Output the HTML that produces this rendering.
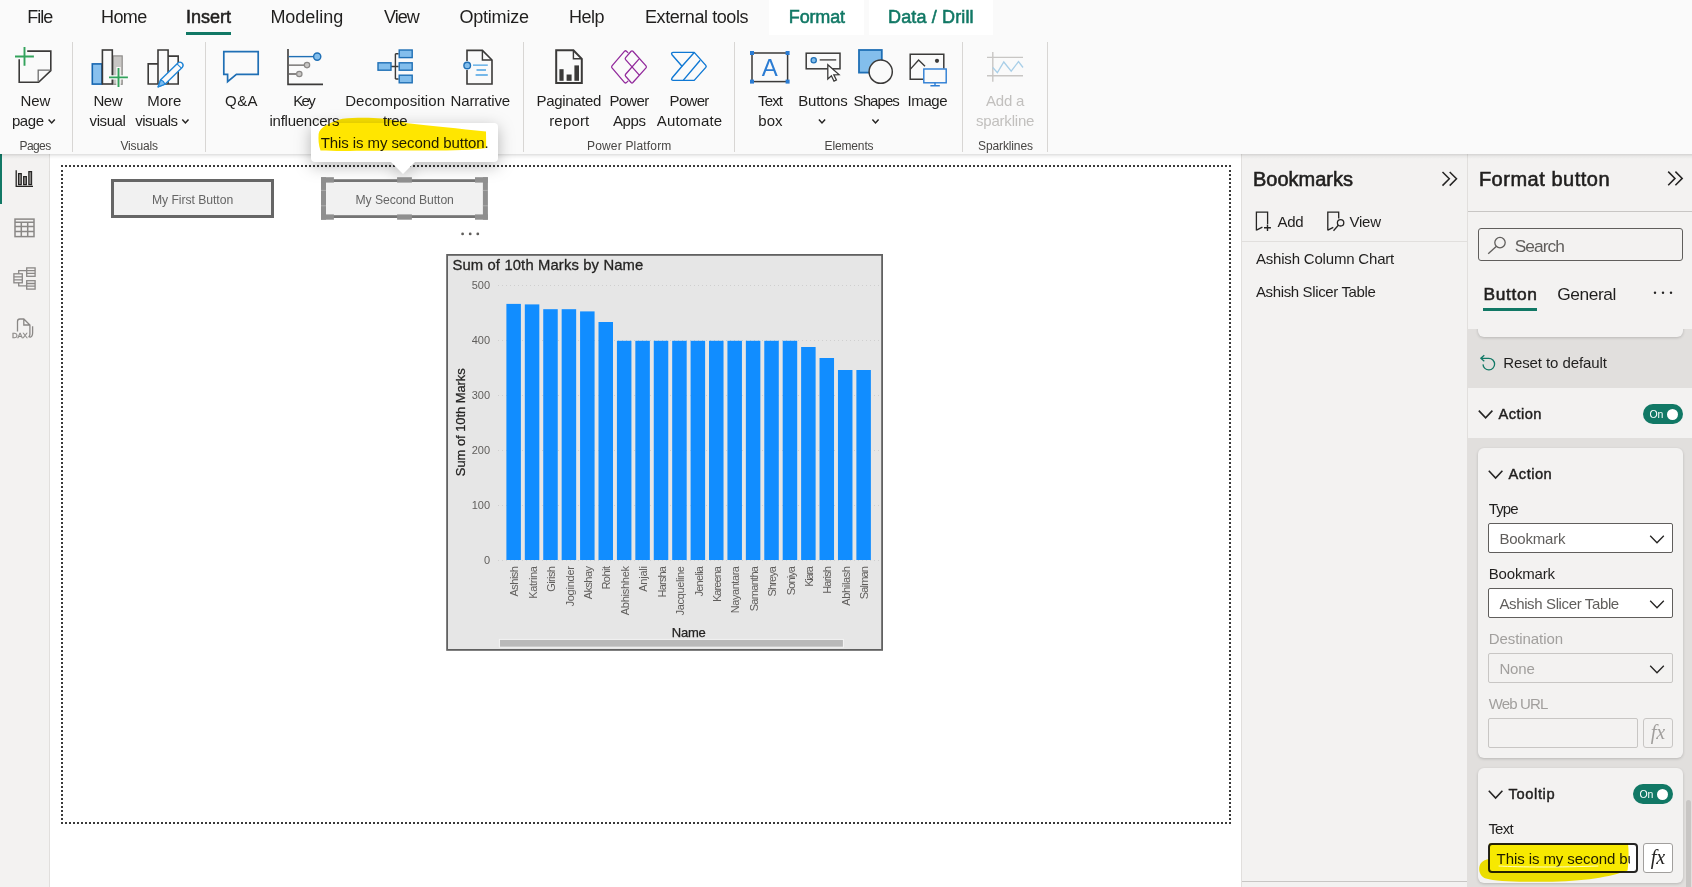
<!DOCTYPE html>
<html lang="en"><head><meta charset="utf-8"><title>Power BI Desktop - Button tooltip</title>
<style>
html,body{margin:0;padding:0}
body{width:1692px;height:887px;position:relative;overflow:hidden;background:#fff;font-family:"Liberation Sans",Arial,sans-serif;color:#252423}
div,span{box-sizing:border-box}
.a{position:absolute}
.t{position:absolute;white-space:nowrap;line-height:1;color:#201f1e}
.icons{position:absolute;left:0;top:0;pointer-events:none}
.ribbon{left:0;top:0;width:1692px;height:154px;background:#fafafa}
.ribshadow{left:0;top:154px;width:1692px;height:5px;background:linear-gradient(rgba(0,0,0,.13),rgba(0,0,0,.04) 50%,rgba(0,0,0,0))}
.ctab{top:0;height:35px;background:#fff}
.sep{top:42px;width:1px;height:110px;background:#d8d6d4}
.uline{height:3px;background:#117865}
.nav{left:0;top:154px;width:50px;height:733px;background:#f3f2f1;border-right:1px solid #e1dfdd}
.navsel{left:0;top:154px;width:2px;height:50px;background:#117865}
.canvas{left:61px;top:165px;width:1170px;height:659px}
.dh{height:2px;background:repeating-linear-gradient(90deg,#3a3a3a 0 2px,transparent 2px 4px)}
.dv{width:2px;background:repeating-linear-gradient(180deg,#3a3a3a 0 2px,transparent 2px 4px)}
.btn1{left:111px;top:179px;width:163px;height:39px;border:3px solid #666;background:#f1f1f1}
.btn2{left:321px;top:177px;width:167px;height:43px;border:4px solid #a0a0a0;background:#f0f0f0}
.h{background:#919191}
.tipwrap{left:0;top:0;width:1692px;height:300px;filter:drop-shadow(0 4px 8px rgba(0,0,0,.28))}
.tip{left:311px;top:123px;width:187px;height:39px;background:#fff;border-radius:4px}
.tiparrow{left:391px;top:161.5px;width:0;height:0;border-left:12.5px solid transparent;border-right:12.5px solid transparent;border-top:12.5px solid #fff}
.pane{top:154px;height:733px;background:#f3f2f1}
.bk{left:1241px;width:227px;border-left:1px solid #e1dfdd;border-right:1px solid #e1dfdd}
.fm{left:1468px;width:224px}
.hl{height:1px}
.gray{left:1468px;width:224px;background:#e1dfdd}
.card{left:1478px;width:205px;background:#f3f2f1;border-radius:6px;box-shadow:0 1px 3px rgba(0,0,0,.18)}
.dd{left:1488px;width:185px;height:30px;border:1px solid #605e5c;border-radius:2px;background:#fff}
.dd.dis{background:#f3f2f1;border-color:#c8c6c4}
.fx{left:1643px;width:30px;height:30px;border:1px solid #c8c6c4;border-radius:3px;font-family:"Liberation Serif",serif;font-style:italic;font-size:20px;line-height:26px;text-align:center}
.tog{width:40px;height:20px;border-radius:10px;background:#117865}
.knob{width:11px;height:11px;border-radius:50%;background:#fff}
.mult{position:absolute;left:0;top:0;mix-blend-mode:multiply;pointer-events:none}

</style></head>
<body>
<div class="a ribbon"></div>
<div class="a ctab" style="left:769px;width:95px"></div>
<div class="a ctab" style="left:869px;width:124px"></div>
<div class="a uline" style="left:186px;top:32px;width:45px"></div>
<div class="a sep" style="left:72px"></div>
<div class="a sep" style="left:205px"></div>
<div class="a sep" style="left:523px"></div>
<div class="a sep" style="left:734px"></div>
<div class="a sep" style="left:962px"></div>
<div class="a sep" style="left:1047px"></div>
<div class="a nav"></div>
<div class="a navsel"></div>
<!-- report canvas -->
<div class="a dh" style="left:61px;top:165px;width:1170px"></div>
<div class="a dh" style="left:61px;top:822px;width:1170px"></div>
<div class="a dv" style="left:61px;top:170px;height:654px"></div>
<div class="a dv" style="left:1229px;top:170px;height:654px"></div>
<div class="a btn1"></div>
<!-- right panes -->
<div class="a pane bk"></div>
<div class="a pane fm"></div>
<div class="a hl" style="left:1242px;top:241px;width:225px;background:#e1dfdd"></div>
<div class="a hl" style="left:1242px;top:881px;width:225px;background:#c8c6c4"></div>
<div class="a hl" style="left:1468px;top:211px;width:224px;background:#c8c6c4"></div>
<div class="a" style="left:1478px;top:228px;width:205px;height:33px;border:1px solid #605e5c;border-radius:3px"></div>
<div class="a uline" style="left:1483px;top:308px;width:54px"></div>
<div class="a gray" style="top:329px;height:558px;overflow:hidden"><div class="a" style="left:-1468px;top:-329px;width:1692px;height:887px">
  <div class="a card" style="top:300px;height:37px"></div>
  <div class="a" style="left:1468px;top:388px;width:224px;height:50px;background:#f3f2f1"></div>
  <div class="a card" style="top:448px;height:310px"></div>
  <div class="a card" style="top:768px;height:115px"></div>
  <div class="a dd" style="top:523px"></div>
  <div class="a dd" style="top:588px"></div>
  <div class="a dd dis" style="top:653px"></div>
  <div class="a dd dis" style="top:718px;width:150px"></div>
  <div class="a fx" style="top:718px;color:#a19f9d">fx</div>
  <div class="a" style="left:1488px;top:843px;width:150px;height:30px;border:2px solid #252423;border-radius:4px;background:#fff"></div>
  <div class="a fx" style="top:843px;background:#fff;color:#252423;border-color:#a19f9d">fx</div>
  <div class="a tog" style="left:1643px;top:404px"></div><div class="a knob" style="left:1666.5px;top:408.5px"></div>
  <div class="a tog" style="left:1633px;top:784px"></div><div class="a knob" style="left:1656.5px;top:788.5px"></div>
  <div class="a" style="left:1686px;top:800px;width:5px;height:90px;background:#c8c6c4;border-radius:3px"></div>
  <div class="a" style="left:1490px;top:845px;width:139.5px;height:26px;overflow:hidden"><span class="t" style="left:6.6px;top:6.00px;font-size:15px;letter-spacing:-0.087px">This is my second button.</span></div>
</div></div>
<div class="a ribshadow"></div>
<div class="a tipwrap"><div class="a tip"></div><div class="a tiparrow"></div></div>

<svg class="icons" width="1692" height="887" viewBox="0 0 1692 887">
<rect x="447.1" y="254.9" width="435" height="395" fill="#e6e6e6" stroke="#616161" stroke-width="1.8"/>
<path d="M498 285.5H879" stroke="#cfcfcf" stroke-width="1" stroke-dasharray="1 3"/>
<text x="490" y="289.2" font-family="Liberation Sans, Arial, sans-serif" font-size="11" fill="#605e5c" text-anchor="end">500</text>
<path d="M498 340.5H879" stroke="#cfcfcf" stroke-width="1" stroke-dasharray="1 3"/>
<text x="490" y="344.2" font-family="Liberation Sans, Arial, sans-serif" font-size="11" fill="#605e5c" text-anchor="end">400</text>
<path d="M498 395.5H879" stroke="#cfcfcf" stroke-width="1" stroke-dasharray="1 3"/>
<text x="490" y="399.2" font-family="Liberation Sans, Arial, sans-serif" font-size="11" fill="#605e5c" text-anchor="end">300</text>
<path d="M498 450.5H879" stroke="#cfcfcf" stroke-width="1" stroke-dasharray="1 3"/>
<text x="490" y="454.2" font-family="Liberation Sans, Arial, sans-serif" font-size="11" fill="#605e5c" text-anchor="end">200</text>
<path d="M498 505.5H879" stroke="#cfcfcf" stroke-width="1" stroke-dasharray="1 3"/>
<text x="490" y="509.2" font-family="Liberation Sans, Arial, sans-serif" font-size="11" fill="#605e5c" text-anchor="end">100</text>
<path d="M498 560.5H879" stroke="#cfcfcf" stroke-width="1" stroke-dasharray="1 3"/>
<text x="490" y="564.2" font-family="Liberation Sans, Arial, sans-serif" font-size="11" fill="#605e5c" text-anchor="end">0</text>
<rect x="506.40" y="303.9" width="14.5" height="256.1" fill="#118dff"/>
<text transform="translate(518.2 566) rotate(-90)" font-family="Liberation Sans, Arial, sans-serif" font-size="11" fill="#605e5c" text-anchor="end" textLength="30.6" lengthAdjust="spacing">Ashish</text>
<rect x="524.82" y="304.4" width="14.5" height="255.6" fill="#118dff"/>
<text transform="translate(536.7 566) rotate(-90)" font-family="Liberation Sans, Arial, sans-serif" font-size="11" fill="#605e5c" text-anchor="end" textLength="32.8" lengthAdjust="spacing">Katrina</text>
<rect x="543.24" y="309.2" width="14.5" height="250.8" fill="#118dff"/>
<text transform="translate(555.1 566) rotate(-90)" font-family="Liberation Sans, Arial, sans-serif" font-size="11" fill="#605e5c" text-anchor="end" textLength="25.8" lengthAdjust="spacing">Girish</text>
<rect x="561.66" y="309.2" width="14.5" height="250.8" fill="#118dff"/>
<text transform="translate(573.5 566) rotate(-90)" font-family="Liberation Sans, Arial, sans-serif" font-size="11" fill="#605e5c" text-anchor="end" textLength="40.6" lengthAdjust="spacing">Joginder</text>
<rect x="580.08" y="311.4" width="14.5" height="248.6" fill="#118dff"/>
<text transform="translate(591.9 566) rotate(-90)" font-family="Liberation Sans, Arial, sans-serif" font-size="11" fill="#605e5c" text-anchor="end" textLength="33.3" lengthAdjust="spacing">Akshay</text>
<rect x="598.50" y="322" width="14.5" height="238.0" fill="#118dff"/>
<text transform="translate(610.4 566) rotate(-90)" font-family="Liberation Sans, Arial, sans-serif" font-size="11" fill="#605e5c" text-anchor="end" textLength="23.6" lengthAdjust="spacing">Rohit</text>
<rect x="616.92" y="340.8" width="14.5" height="219.2" fill="#118dff"/>
<text transform="translate(628.8 566) rotate(-90)" font-family="Liberation Sans, Arial, sans-serif" font-size="11" fill="#605e5c" text-anchor="end" textLength="49.2" lengthAdjust="spacing">Abhishhek</text>
<rect x="635.34" y="340.8" width="14.5" height="219.2" fill="#118dff"/>
<text transform="translate(647.2 566) rotate(-90)" font-family="Liberation Sans, Arial, sans-serif" font-size="11" fill="#605e5c" text-anchor="end" textLength="25.8" lengthAdjust="spacing">Anjali</text>
<rect x="653.76" y="340.8" width="14.5" height="219.2" fill="#118dff"/>
<text transform="translate(665.6 566) rotate(-90)" font-family="Liberation Sans, Arial, sans-serif" font-size="11" fill="#605e5c" text-anchor="end" textLength="31.4" lengthAdjust="spacing">Harsha</text>
<rect x="672.18" y="340.8" width="14.5" height="219.2" fill="#118dff"/>
<text transform="translate(684.0 566) rotate(-90)" font-family="Liberation Sans, Arial, sans-serif" font-size="11" fill="#605e5c" text-anchor="end" textLength="49.4" lengthAdjust="spacing">Jacqueline</text>
<rect x="690.60" y="340.8" width="14.5" height="219.2" fill="#118dff"/>
<text transform="translate(702.5 566) rotate(-90)" font-family="Liberation Sans, Arial, sans-serif" font-size="11" fill="#605e5c" text-anchor="end" textLength="30.6" lengthAdjust="spacing">Jenelia</text>
<rect x="709.02" y="340.8" width="14.5" height="219.2" fill="#118dff"/>
<text transform="translate(720.9 566) rotate(-90)" font-family="Liberation Sans, Arial, sans-serif" font-size="11" fill="#605e5c" text-anchor="end" textLength="36.1" lengthAdjust="spacing">Kareena</text>
<rect x="727.44" y="340.8" width="14.5" height="219.2" fill="#118dff"/>
<text transform="translate(739.3 566) rotate(-90)" font-family="Liberation Sans, Arial, sans-serif" font-size="11" fill="#605e5c" text-anchor="end" textLength="47.2" lengthAdjust="spacing">Nayantara</text>
<rect x="745.86" y="340.8" width="14.5" height="219.2" fill="#118dff"/>
<text transform="translate(757.7 566) rotate(-90)" font-family="Liberation Sans, Arial, sans-serif" font-size="11" fill="#605e5c" text-anchor="end" textLength="45.3" lengthAdjust="spacing">Samantha</text>
<rect x="764.28" y="340.8" width="14.5" height="219.2" fill="#118dff"/>
<text transform="translate(776.1 566) rotate(-90)" font-family="Liberation Sans, Arial, sans-serif" font-size="11" fill="#605e5c" text-anchor="end" textLength="30.6" lengthAdjust="spacing">Shreya</text>
<rect x="782.70" y="340.8" width="14.5" height="219.2" fill="#118dff"/>
<text transform="translate(794.6 566) rotate(-90)" font-family="Liberation Sans, Arial, sans-serif" font-size="11" fill="#605e5c" text-anchor="end" textLength="29.2" lengthAdjust="spacing">Soniya</text>
<rect x="801.12" y="347" width="14.5" height="213.0" fill="#118dff"/>
<text transform="translate(813.0 566) rotate(-90)" font-family="Liberation Sans, Arial, sans-serif" font-size="11" fill="#605e5c" text-anchor="end" textLength="20.8" lengthAdjust="spacing">Kiara</text>
<rect x="819.54" y="358" width="14.5" height="202.0" fill="#118dff"/>
<text transform="translate(831.4 566) rotate(-90)" font-family="Liberation Sans, Arial, sans-serif" font-size="11" fill="#605e5c" text-anchor="end" textLength="27.8" lengthAdjust="spacing">Harish</text>
<rect x="837.96" y="370" width="14.5" height="190.0" fill="#118dff"/>
<text transform="translate(849.8 566) rotate(-90)" font-family="Liberation Sans, Arial, sans-serif" font-size="11" fill="#605e5c" text-anchor="end" textLength="39.7" lengthAdjust="spacing">Abhilash</text>
<rect x="856.38" y="370" width="14.5" height="190.0" fill="#118dff"/>
<text transform="translate(868.2 566) rotate(-90)" font-family="Liberation Sans, Arial, sans-serif" font-size="11" fill="#605e5c" text-anchor="end" textLength="33.3" lengthAdjust="spacing">Salman</text>
<text x="452.4" y="269.8" font-family="Liberation Sans, Arial, sans-serif" font-size="14.8" fill="#252423" stroke="#252423" stroke-width="0.3" textLength="190.9" lengthAdjust="spacing">Sum of 10th Marks by Name</text>
<text x="671.7" y="636.7" font-family="Liberation Sans, Arial, sans-serif" font-size="13" fill="#252423" stroke="#252423" stroke-width="0.25" textLength="34.1" lengthAdjust="spacing">Name</text>
<text transform="translate(464.5 422.2) rotate(-90)" font-family="Liberation Sans, Arial, sans-serif" font-size="13" fill="#252423" stroke="#252423" stroke-width="0.25" text-anchor="middle" textLength="108" lengthAdjust="spacing">Sum of 10th Marks</text>
<rect x="499.4" y="639.4" width="344" height="7.8" fill="#b9b9b9" stroke="#f4f4f4" stroke-width="1"/>
</svg>
<svg class="icons" width="1692" height="887" viewBox="0 0 1692 887">
<g fill="none" stroke-linecap="butt" stroke-linejoin="miter">
<!-- New page -->
<path d="M27.2 51.1H50.8V70.6L38.6 82.3H19.2V59.2" stroke="#3b3a39" stroke-width="1.6"/>
<path d="M38.2 82V70.2H50.4" stroke="#6e6e6e" stroke-width="1.3"/>
<path d="M15 56.5H33.9M24.5 47.1V65.7" stroke="#33a35c" stroke-width="1.9"/>
<path d="M48.6 119.6L51.7 122.9L54.8 119.6" stroke="#252423" stroke-width="1.5"/>
<!-- New visual -->
<rect x="113.1" y="55.9" width="9.1" height="28.4" fill="#c8c6c4" stroke="#8f8d8b" stroke-width="1.2"/>
<rect x="92.3" y="63.9" width="9.6" height="20.2" fill="#88c0ee" stroke="#1565b0" stroke-width="1.6"/>
<rect x="102.4" y="50" width="9.9" height="34" fill="#fafafa" stroke="#3b3a39" stroke-width="1.6"/>
<path d="M108 77.4H128.9M118.5 67V87.9" stroke="#fafafa" stroke-width="4.4"/>
<path d="M109 77.4H127.9M118.5 68V86.9" stroke="#33a35c" stroke-width="1.9"/>
<!-- More visuals -->
<path d="M148.2 84V63.9H158M158 84V50H168.1V84M168.1 56.1H178.2V84M147.4 84H179" stroke="#3b3a39" stroke-width="1.6"/>
<path d="M158.1 86.9L160.7 79.8L177.9 63A3.1 3.1 0 0 1 182.4 67.2L165 84.2Z" fill="#fafafa" stroke="#1f84d6" stroke-width="1.4" stroke-linejoin="round"/>
<path d="M158.1 86.9L160.7 79.8Q163.8 80.8 165 84.2Z" fill="#7dbcf0" stroke="#1f84d6" stroke-width="1.2" stroke-linejoin="round"/>
<path d="M177 63.9L181.4 68.2" stroke="#1f84d6" stroke-width="1.1"/>
<path d="M182.3 119.6L185.4 122.9L188.5 119.6" stroke="#252423" stroke-width="1.5"/>
<!-- Q&A -->
<path d="M223.8 51.6H258.2V74.4H236.4L227.6 81.6V74.4H223.8Z" stroke="#1f6fb5" stroke-width="1.7"/>
<!-- Key influencers -->
<path d="M288 49V84.4H323" stroke="#3b3a39" stroke-width="1.6"/>
<path d="M288.8 56.6H313" stroke="#1f6fb5" stroke-width="1.4"/>
<circle cx="317.2" cy="56.6" r="3.6" fill="#83beec" stroke="#1f6fb5" stroke-width="1.4"/>
<path d="M288.8 65.1H304M288.8 74H296" stroke="#605e5c" stroke-width="1.4"/>
<circle cx="307" cy="65.1" r="2.7" fill="#c8c6c4" stroke="#8a8886" stroke-width="1.2"/>
<circle cx="299.3" cy="74" r="2.7" fill="#c8c6c4" stroke="#8a8886" stroke-width="1.2"/>
<!-- Decomposition tree -->
<path d="M391 66.5H398.6M395.4 53.8V79M395.4 53.8H398.6M395.4 79H398.6" stroke="#3b3a39" stroke-width="1.4"/>
<rect x="378" y="62.8" width="13" height="7.4" fill="#83beec" stroke="#1f6fb5" stroke-width="1.4"/>
<rect x="399.2" y="50" width="13" height="7.6" fill="#83beec" stroke="#1f6fb5" stroke-width="1.4"/>
<rect x="399.2" y="62.8" width="13" height="7.4" fill="#83beec" stroke="#1f6fb5" stroke-width="1.4"/>
<rect x="399.2" y="75.2" width="13" height="7.6" fill="#83beec" stroke="#1f6fb5" stroke-width="1.4"/>
<!-- Narrative -->
<path d="M467 61V50.4H482.4L492 60V84H467V70" stroke="#3b3a39" stroke-width="1.6"/>
<path d="M482.4 50.4V60H492" stroke="#3b3a39" stroke-width="1.4"/>
<circle cx="467.2" cy="65.5" r="3.3" fill="#83beec" stroke="#1f6fb5" stroke-width="1.4"/>
<path d="M473 65.1H487.8M476.5 70H486M475.6 75H487.8" stroke="#4ba3e3" stroke-width="1.3"/>
<!-- Paginated report -->
<path d="M556.2 50.3H573.4L581.8 58.8V83H556.2Z" stroke="#3b3a39" stroke-width="2"/>
<path d="M573.4 50.3V58.8H581.8" stroke="#3b3a39" stroke-width="1.4"/>
<rect x="559.4" y="69.2" width="4.2" height="11.6" fill="#3b3a39"/><rect x="566.6" y="74.5" width="5" height="6.3" fill="#3b3a39"/><rect x="574.4" y="65.4" width="4.6" height="15.4" fill="#3b3a39"/>
<!-- Power Apps -->
<g stroke="#922a9c" stroke-width="1.3" stroke-linejoin="round">
<path d="M628.2 52.9L626.4 51.2Q625.5 50.4 624.6 51.2L612 65.9Q611.2 66.9 612 67.9L624.6 82.6Q625.5 83.4 626.4 82.6L628.2 80.9"/>
<path d="M631.1 51.3Q632 50.4 632.9 51.3L646 65.9Q646.8 66.9 646 67.9L632.9 82.5Q632 83.4 631.1 82.5L625.6 76.2Q624.8 75.2 625.6 74.2L638.9 59.1M631.1 51.3L625.6 57.6Q624.8 58.6 625.6 59.6L639.1 74.9"/>
</g>
<!-- Power Automate -->
<g stroke="#0f78d4" stroke-width="1.4" stroke-linejoin="round">
<path d="M673 52.4H694.2L705.8 65.4Q706.6 66.4 705.8 67.4L694.2 80.4H673Q670.6 80 672.2 77.8L682 66.2L672.2 55Q670.6 52.8 673 52.4Z"/>
<path d="M694 52.8L682 66.2M700.2 60.3L683.4 80.1"/>
</g>
<!-- Text box -->
<rect x="752" y="53" width="35.6" height="28.6" stroke="#3b3a39" stroke-width="1.5"/>
<g fill="#2b7cd3" stroke="none"><rect x="750" y="51" width="4" height="4"/><rect x="785.6" y="51" width="4" height="4"/><rect x="750" y="79.6" width="4" height="4"/><rect x="785.6" y="79.6" width="4" height="4"/></g>
<!-- Buttons -->
<rect x="806.2" y="53.2" width="33.8" height="15.6" stroke="#3b3a39" stroke-width="1.5"/>
<circle cx="813.7" cy="60.2" r="2.6" fill="#83beec" stroke="#1f6fb5" stroke-width="1.3"/>
<path d="M819.7 59.9H836.2" stroke="#3b3a39" stroke-width="1.3"/>
<path d="M827.8 64.8V79L831.4 75.8L834 81.2L836.4 80L833.8 74.8L839 74.6Z" fill="#fff" stroke="#3b3a39" stroke-width="1.3" stroke-linejoin="miter"/>
<path d="M818.9 119.6L822 122.9L825.1 119.6M872.4 119.6L875.5 122.9L878.6 119.6" stroke="#252423" stroke-width="1.5"/>
<!-- Shapes -->
<rect x="859" y="50" width="22.8" height="22.6" fill="#83beec" stroke="#1f6fb5" stroke-width="1.8"/>
<circle cx="880.7" cy="71.7" r="11.6" fill="#fafafa" stroke="#3b3a39" stroke-width="1.5"/>
<!-- Image -->
<path d="M923.2 79.2H910.2V54.2H943.8V68.4" stroke="#3b3a39" stroke-width="1.5"/>
<path d="M910.2 69.4L918.6 60L925 66.2" stroke="#3b3a39" stroke-width="1.4"/>
<circle cx="937" cy="60.8" r="2.1" fill="#3b3a39"/>
<rect x="923.8" y="69" width="22.4" height="13.8" fill="#fafafa" stroke="#2b7cd3" stroke-width="1.4"/>
<path d="M935 82.8V85.8M930.4 85.8H939.8" stroke="#2b7cd3" stroke-width="1.4"/>
<!-- Sparkline (disabled) -->
<path d="M992.8 52V81.8M987 57.4H1023M987 75.7H1023" stroke="#c8c6c4" stroke-width="1.4"/>
<path d="M992.8 67.5L997.4 72.6L1003.8 62L1011.2 71.1L1018.5 61.6L1023 67.5" stroke="#a9cfe8" stroke-width="1.3"/>
<!-- second button + selection handles -->
<rect x="324.3" y="180.6" width="160.8" height="36" fill="#f1f1f1" stroke="#747474" stroke-width="2.8"/>
<g fill="#8f8f8f" stroke="none">
<rect x="321" y="177.2" width="5" height="42.5"/><rect x="482.9" y="177.2" width="5" height="42.5"/>
<rect x="321" y="177.2" width="12.9" height="5.4"/><rect x="475" y="177.2" width="12.9" height="5.4"/>
<rect x="321" y="214.4" width="12.9" height="5.3"/><rect x="475" y="214.4" width="12.9" height="5.3"/>
<rect x="397.1" y="177.2" width="14.8" height="5.4"/><rect x="397.1" y="214.4" width="14.8" height="5.3"/>
</g>
<path d="M321 190.4H326M321 205.8H326M482.9 190.4H487.9M482.9 205.8H487.9" stroke="#b5b5b5" stroke-width="0.8"/>
<!-- left nav -->
<path d="M16.2 170.2V186.4H33" stroke="#252423" stroke-width="1.3"/>
<path d="M18.5 184.6V173.6H21.3V184.6ZM23.6 184.6V176.6H26.4V184.6ZM28.8 184.6V171.6H31.6V184.6Z" stroke="#252423" stroke-width="1.1" fill="#8a8886"/>
<g stroke="#8a8886" stroke-width="1.5">
<rect x="15" y="219.1" width="19" height="17.5"/><path d="M15 222.2H34M15 226.6H34M15 231.6H34M21.3 222.2V236.6M27.7 222.2V236.6"/>
</g>
<g stroke="#8a8886" stroke-width="1.3">
<rect x="13.9" y="273.8" width="8.4" height="9"/><path d="M13.9 276.8H22.3M13.9 279.8H22.3"/>
<rect x="26.7" y="267.9" width="8.4" height="8.4"/><path d="M26.7 270.7H35.1M26.7 273.3H35.1"/>
<rect x="26.7" y="280.7" width="8.4" height="8.4"/><path d="M26.7 283.5H35.1M26.7 286.1H35.1"/>
<path d="M18.7 273.8V270.7H26.7M18.7 282.8V285.9H26.7"/>
<path d="M17.5 331.6V321.4Q17.5 319 19.9 319H23.8L29.9 325V334.6Q29.9 336.6 28.4 336.8M23.8 319V325H29.9M32.6 326.2V333Q32.6 337 29.4 337.4"/>
</g>
<!-- bookmarks pane -->
<path d="M1442.5 172L1449.3 178.8L1442.5 185.6M1449.7 172L1456.5 178.8L1449.7 185.6" stroke="#252423" stroke-width="1.5"/>
<path d="M1256.4 230.6V212.1H1267.6V224M1256.4 230.2L1262.4 227.2" stroke="#252423" stroke-width="1.3"/>
<path d="M1264 227.8H1270.9M1267.5 224.6V231" stroke="#252423" stroke-width="1.4"/>
<path d="M1327.8 230.6V212.1H1338.7V218.4M1327.8 230.2L1333.3 227.4" stroke="#252423" stroke-width="1.3"/>
<circle cx="1340.6" cy="222.8" r="3.2" stroke="#252423" stroke-width="1.3"/><path d="M1338.3 225.3L1333.5 230.7" stroke="#252423" stroke-width="1.3"/>
<!-- format pane -->
<path d="M1668.2 171.6L1675 178.4L1668.2 185.2M1675.4 171.6L1682.2 178.4L1675.4 185.2" stroke="#252423" stroke-width="1.5"/>
<circle cx="1500" cy="242.6" r="5.2" stroke="#605e5c" stroke-width="1.3"/><path d="M1496.2 246.4L1488.2 253.8" stroke="#605e5c" stroke-width="1.3"/>
<g fill="#252423" stroke="none"><circle cx="1655" cy="292.8" r="1.2"/><circle cx="1663" cy="292.8" r="1.2"/><circle cx="1671" cy="292.8" r="1.2"/></g>
<g fill="#605e5c" stroke="none"><circle cx="462.6" cy="233.9" r="1.4"/><circle cx="470.2" cy="233.9" r="1.4"/><circle cx="477.8" cy="233.9" r="1.4"/></g>
<path d="M1484.3 355.2L1480.8 358.3L1484.3 361.2M1480.8 358.3H1488.8A5.8 5.8 0 1 1 1483 364.4" stroke="#117865" stroke-width="1.3" stroke-linejoin="round"/>
<g stroke="#252423" stroke-width="1.6">
<path d="M1478.8 410.6L1485.6 417.8L1492.4 410.6M1488.8 470.8L1495.6 478L1502.4 470.8M1488.8 790.8L1495.6 798L1502.4 790.8"/>
</g>
<g stroke="#252423" stroke-width="1.3">
<path d="M1650.2 535.8L1657 542.8L1663.8 535.8M1650.2 600.8L1657 607.8L1663.8 600.8M1650.2 665.8L1657 672.8L1663.8 665.8"/>
</g>
</g>
<text x="769.8" y="76" font-family="Liberation Sans, Arial, sans-serif" font-size="24" fill="#2b7cd3" text-anchor="middle">A</text>
<text x="11.9" y="338.2" font-family="Liberation Sans, Arial, sans-serif" font-size="7.8" fill="#8a8886" stroke="#8a8886" stroke-width="0.3" textLength="15.9" lengthAdjust="spacingAndGlyphs">DAX</text>

</svg>
<div class="texts">
<span class="t" style="left:27.3px;top:8.00px;font-size:18px;letter-spacing:-1.005px;">File</span>
<span class="t" style="left:101.0px;top:8.00px;font-size:18px;letter-spacing:-0.572px;">Home</span>
<span class="t" style="left:186.0px;top:8.00px;font-size:18px;letter-spacing:-0.006px;-webkit-text-stroke:0.55px;">Insert</span>
<span class="t" style="left:270.4px;top:8.00px;font-size:18px;letter-spacing:-0.035px;">Modeling</span>
<span class="t" style="left:384.0px;top:8.00px;font-size:18px;letter-spacing:-1.001px;">View</span>
<span class="t" style="left:459.4px;top:8.00px;font-size:18px;letter-spacing:-0.202px;">Optimize</span>
<span class="t" style="left:569.0px;top:8.00px;font-size:18px;letter-spacing:-0.544px;">Help</span>
<span class="t" style="left:645.0px;top:8.00px;font-size:18px;letter-spacing:-0.428px;">External tools</span>
<span class="t" style="left:788.8px;top:8.00px;font-size:18px;letter-spacing:-0.163px;-webkit-text-stroke:0.55px;color:#117865;">Format</span>
<span class="t" style="left:888.0px;top:8.00px;font-size:18px;letter-spacing:0.144px;-webkit-text-stroke:0.55px;color:#117865;">Data / Drill</span>
<span class="t" style="left:20.5px;top:93.00px;font-size:15px;letter-spacing:-0.108px;">New</span>
<span class="t" style="left:11.9px;top:113.00px;font-size:15px;letter-spacing:-0.425px;">page</span>
<span class="t" style="left:93.4px;top:93.00px;font-size:15px;letter-spacing:-0.458px;">New</span>
<span class="t" style="left:89.6px;top:113.00px;font-size:15px;letter-spacing:-0.432px;">visual</span>
<span class="t" style="left:147.2px;top:93.00px;font-size:15px;letter-spacing:-0.029px;">More</span>
<span class="t" style="left:135.3px;top:113.00px;font-size:15px;letter-spacing:-0.527px;">visuals</span>
<span class="t" style="left:225.1px;top:93.00px;font-size:15px;letter-spacing:0.406px;">Q&amp;A</span>
<span class="t" style="left:293.2px;top:93.00px;font-size:15px;letter-spacing:-1.580px;">Key</span>
<span class="t" style="left:269.5px;top:113.00px;font-size:15px;letter-spacing:-0.255px;">influencers</span>
<span class="t" style="left:345.2px;top:93.00px;font-size:15px;letter-spacing:0.048px;">Decomposition</span>
<span class="t" style="left:383.0px;top:113.00px;font-size:15px;letter-spacing:-0.453px;">tree</span>
<span class="t" style="left:450.5px;top:93.00px;font-size:15px;letter-spacing:-0.145px;">Narrative</span>
<span class="t" style="left:536.5px;top:93.00px;font-size:15px;letter-spacing:-0.333px;">Paginated</span>
<span class="t" style="left:549.2px;top:113.00px;font-size:15px;letter-spacing:0.182px;">report</span>
<span class="t" style="left:609.4px;top:93.00px;font-size:15px;letter-spacing:-0.683px;">Power</span>
<span class="t" style="left:612.9px;top:113.00px;font-size:15px;letter-spacing:-0.368px;">Apps</span>
<span class="t" style="left:669.6px;top:93.00px;font-size:15px;letter-spacing:-0.708px;">Power</span>
<span class="t" style="left:656.8px;top:113.00px;font-size:15px;letter-spacing:0.154px;">Automate</span>
<span class="t" style="left:758.0px;top:93.00px;font-size:15px;letter-spacing:-0.839px;">Text</span>
<span class="t" style="left:758.3px;top:113.00px;font-size:15px;letter-spacing:0.006px;">box</span>
<span class="t" style="left:798.3px;top:93.00px;font-size:15px;letter-spacing:-0.246px;">Buttons</span>
<span class="t" style="left:853.6px;top:93.00px;font-size:15px;letter-spacing:-0.935px;">Shapes</span>
<span class="t" style="left:907.6px;top:93.00px;font-size:15px;letter-spacing:-0.426px;">Image</span>
<span class="t" style="left:985.9px;top:93.00px;font-size:15px;letter-spacing:-0.176px;color:#c2c0be;">Add a</span>
<span class="t" style="left:976.0px;top:113.00px;font-size:15px;letter-spacing:-0.204px;color:#c2c0be;">sparkline</span>
<span class="t" style="left:19.6px;top:140.00px;font-size:12px;letter-spacing:-0.608px;color:#484644;">Pages</span>
<span class="t" style="left:120.4px;top:140.00px;font-size:12px;letter-spacing:-0.145px;color:#484644;">Visuals</span>
<span class="t" style="left:587.0px;top:140.00px;font-size:12px;letter-spacing:0.175px;color:#484644;">Power Platform</span>
<span class="t" style="left:824.6px;top:140.00px;font-size:12px;letter-spacing:-0.147px;color:#484644;">Elements</span>
<span class="t" style="left:978.0px;top:140.00px;font-size:12px;letter-spacing:-0.115px;color:#484644;">Sparklines</span>
<span class="t" style="left:152.0px;top:194.00px;font-size:12.2px;letter-spacing:-0.054px;color:#666;">My First Button</span>
<span class="t" style="left:355.5px;top:194.00px;font-size:12.2px;letter-spacing:-0.080px;color:#666;">My Second Button</span>
<span class="t ontop" style="left:320.7px;top:135.00px;font-size:15px;letter-spacing:-0.087px;color:#201f1e;">This is my second button.</span>
<span class="t" style="left:1253.0px;top:169.00px;font-size:20px;letter-spacing:-0.004px;-webkit-text-stroke:0.6px;">Bookmarks</span>
<span class="t" style="left:1277.5px;top:214.00px;font-size:15px;letter-spacing:-0.252px;">Add</span>
<span class="t" style="left:1349.4px;top:214.00px;font-size:15px;letter-spacing:-0.217px;">View</span>
<span class="t" style="left:1255.9px;top:251.00px;font-size:15px;letter-spacing:-0.185px;">Ashish Column Chart</span>
<span class="t" style="left:1255.9px;top:284.00px;font-size:15px;letter-spacing:-0.359px;">Ashish Slicer Table</span>
<span class="t" style="left:1478.9px;top:169.00px;font-size:20px;letter-spacing:0.515px;-webkit-text-stroke:0.6px;">Format button</span>
<span class="t" style="left:1514.7px;top:238.00px;font-size:17.33px;letter-spacing:-0.921px;color:#605e5c;">Search</span>
<span class="t" style="left:1483.5px;top:286.00px;font-size:17.33px;letter-spacing:0.638px;-webkit-text-stroke:0.55px;">Button</span>
<span class="t" style="left:1557.3px;top:286.00px;font-size:17.33px;letter-spacing:-0.443px;">General</span>
<span class="t" style="left:1503.2px;top:355.00px;font-size:15px;letter-spacing:-0.085px;">Reset to default</span>
<span class="t" style="left:1498.4px;top:407.00px;font-size:14.67px;letter-spacing:0.473px;-webkit-text-stroke:0.45px;">Action</span>
<span class="t" style="left:1649.5px;top:409.00px;font-size:10.5px;letter-spacing:-0.216px;color:#fff;">On</span>
<span class="t" style="left:1508.6px;top:467.00px;font-size:14.67px;letter-spacing:0.473px;-webkit-text-stroke:0.45px;">Action</span>
<span class="t" style="left:1488.8px;top:501.00px;font-size:15px;letter-spacing:-0.944px;">Type</span>
<span class="t" style="left:1499.4px;top:531.00px;font-size:15px;letter-spacing:-0.204px;color:#605e5c;">Bookmark</span>
<span class="t" style="left:1488.8px;top:566.00px;font-size:15px;letter-spacing:-0.190px;">Bookmark</span>
<span class="t" style="left:1499.4px;top:596.00px;font-size:15px;letter-spacing:-0.370px;color:#605e5c;">Ashish Slicer Table</span>
<span class="t" style="left:1488.8px;top:631.00px;font-size:15px;letter-spacing:-0.085px;color:#a19f9d;">Destination</span>
<span class="t" style="left:1499.4px;top:661.00px;font-size:15px;letter-spacing:-0.153px;color:#a19f9d;">None</span>
<span class="t" style="left:1488.8px;top:696.00px;font-size:15px;letter-spacing:-0.875px;color:#a19f9d;">Web URL</span>
<span class="t" style="left:1508.6px;top:787.00px;font-size:14.67px;letter-spacing:0.604px;-webkit-text-stroke:0.45px;">Tooltip</span>
<span class="t" style="left:1639.5px;top:789.00px;font-size:10.5px;letter-spacing:-0.216px;color:#fff;">On</span>
<span class="t" style="left:1488.4px;top:821.00px;font-size:15px;letter-spacing:-0.772px;">Text</span>
</div>
<svg class="mult" width="1692" height="887" viewBox="0 0 1692 887">
<path d="M318.6 134 C319 128 330 122 342.5 118.8 C355 117.4 372 117.6 382 118.6 C392 119.6 400 121.5 408 123.2 C430 126 460 128.5 486 131.5 L486.2 148 C470 151 440 150.5 400 150.5 C370 150.5 340 151.5 320.5 150.5 C318.4 145 318.3 139 318.6 134Z" fill="#ffe600"/>
<path d="M1489 843.5 L1628 843.5 C1629 852 1628.6 862 1627.6 870.5 C1610 877 1585 881.5 1545 881.8 C1520 882 1496 881.5 1486 878.5 C1479 876 1477.5 868 1481 863 C1483 860.5 1486 859.5 1489 859Z" fill="#f7e900"/>
</svg>

<svg class="icons" width="1692" height="887" viewBox="0 0 1692 887"><path d="M1498.6 866 C1520 867.2 1560 867.4 1598.3 866" fill="none" stroke="#fffde0" stroke-width="1" opacity=".85"/></svg>

</body></html>
